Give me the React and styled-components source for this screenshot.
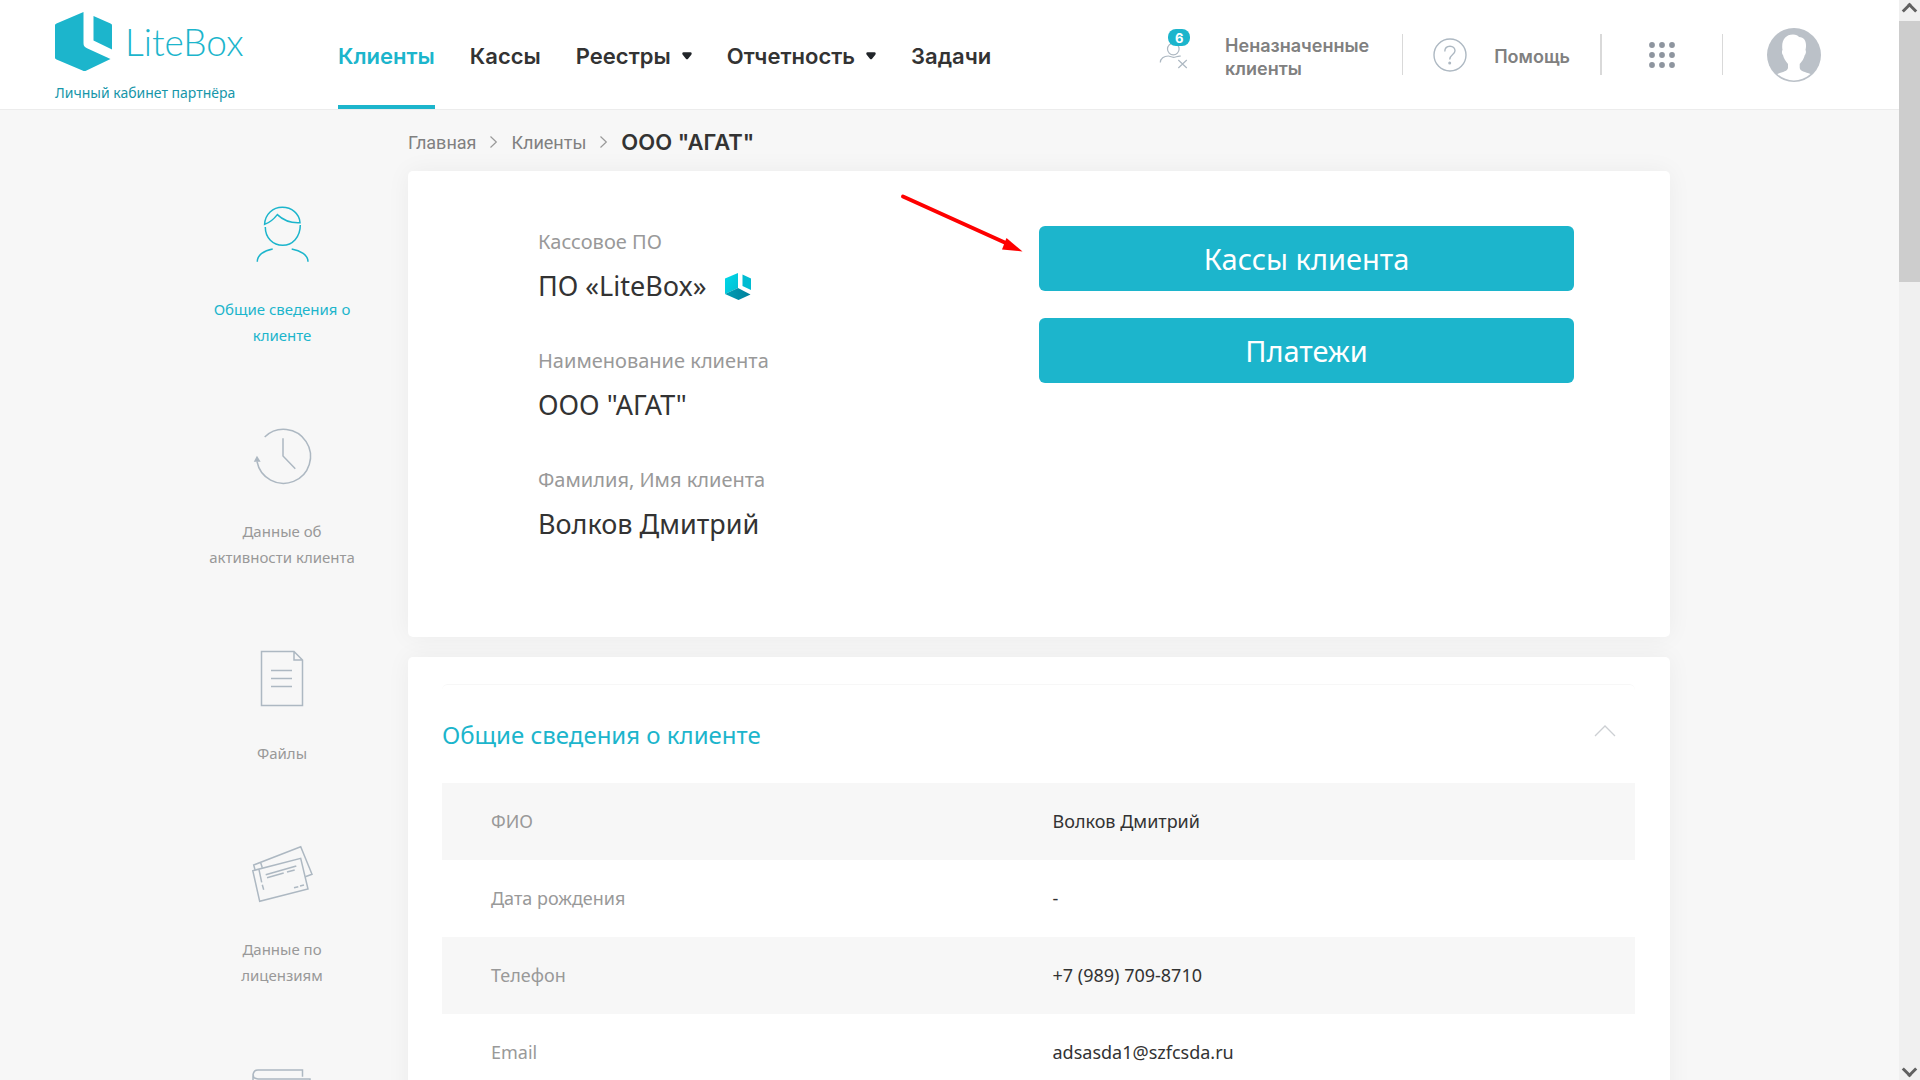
import React, { useState } from 'react'
import styled, { createGlobalStyle, css } from 'styled-components'

const colors = {
  main: '#1cb5cc',
  mainDark: '#1796a9',
  text: '#333333',
  gray: '#999999',
  navGray: '#808080',
  icon: '#adb8c2',
  line: '#ececec',
  background: '#f7f7f7',
}

const headFont = `Inter, Roboto, sans-serif`
const crumbFont = `Roboto, sans-serif`
const bodyFont = `'Noto Sans', 'Open Sans', sans-serif`

const NAV = [
  { title: 'Клиенты', active: true },
  { title: 'Кассы' },
  { title: 'Реестры', menu: true },
  { title: 'Отчетность', menu: true },
  { title: 'Задачи' },
]

const ROWS = [
  ['ФИО', 'Волков Дмитрий'],
  ['Дата рождения', '-'],
  ['Телефон', '+7 (989) 709-8710'],
  ['Email', 'adsasda1@szfcsda.ru'],
]

const UserIcon = () => (
  <svg width="56" height="56" viewBox="-1 0 56 56">
    <path d="M9.6 18.4C10 8 18 1.3 27.3 1.3S44.6 7.6 45 16.7C36.500 17.200 28.500 14.500 22.300 8.600C18.500 13.500 15 16.500 9.600 18.400Z" />
    <path d="M10.300 21C10.300 32 18 39.300 27.700 39.300S45.300 31 45.300 19" />
    <path d="M2.300 55.700C2.300 49 9 44.500 17.700 43M36.700 43C45.500 44.500 53 49 53 55.700" />
  </svg>
)

const ClockIcon = () => (
  <svg width="60" height="56" viewBox="-1 1 60 56">
    <path d="M11.700 10A27 27 0 1 1 4 34.500" />
    <path d="M30 11.300V29L42.300 41.700" />
    <path d="M2 34L4 30.300L6.300 34Z" fill="currentColor" />
  </svg>
)

const FileIcon = () => (
  <svg width="56" height="56" viewBox="0 0 56 56">
    <path d="M7.500 1.500H40L48.500 10V55.500H7.500ZM40 1.500V10H48.500" />
    <path d="M17 20.500H38M17 28.500H38M17 36.500H38" />
  </svg>
)

const LicenseIcon = () => (
  <svg width="62" height="56" viewBox="-1 0 62 56">
    <path d="M0.800 24.700L48.700 12.300L56 43L7.700 55.300Z" />
    <path d="M3 23.700L1.700 19L48.700 0.800L60 28.300L53.300 30.700M8.700 16.700L10.300 21.700" />
    <path d="M7 23.700L9.700 36.300M10.300 38.700L11.700 43.700M13.700 28.700L44.300 20M15 31.700L31.700 27M35 26L42.700 24M42 41.700L46.300 40.700M48 40L52 39" />
  </svg>
)

const BookIcon = () => (
  <svg width="60" height="56" viewBox="0 0 60 56">
    <path d="M50.500 8.700V2H6C2.500 2 1 5 1 8V50C1 53 3 55 6 55H58V11H6C3 11 1 9.500 1 6" />
  </svg>
)

const SIDEBAR = [
  { title: 'Общие сведения о клиенте', icon: UserIcon, active: true },
  { title: 'Данные об активности клиента', icon: ClockIcon },
  { title: 'Файлы', icon: FileIcon },
  { title: 'Данные по лицензиям', icon: LicenseIcon },
]

const LogoIcon = () => (
  <svg width="57" height="59" viewBox="0 0 57 59" fill={colors.main}>
    <path d="M28.500 0V31C28.500 34 29.500 35 32 36.300L55.500 47L31.500 58.500C30 59.200 29 59.200 27.500 58.500L1.500 47.500C0.500 47 0 46.500 0 45.500V13.500C0 12.500 0.500 12 1.500 11.500Z" />
    <path d="M38.500 4L55.500 11.500C56.500 12 57 12.500 57 13.500V37.500L38.500 28.500Z" />
  </svg>
)

const CubeIcon = () => (
  <svg width="26" height="27" viewBox="0 0 26 27">
    <defs>
      <linearGradient id="cubeLeft" x1="0" y1="0" x2="1" y2="1">
        <stop offset="0" stopColor="#00d8e8" />
        <stop offset="1" stopColor="#00bfd4" />
      </linearGradient>
      <linearGradient id="cubeBottom" x1="0" y1="0" x2="1" y2="0">
        <stop offset="0" stopColor="#009fb6" />
        <stop offset="1" stopColor="#007f9b" />
      </linearGradient>
    </defs>
    <path d="M13 0V15L0 21V5.500Z" fill="url(#cubeLeft)" />
    <path d="M13 15L25.500 21.500L13.500 27L0 21Z" fill="url(#cubeBottom)" />
    <path d="M17.500 1.500L26 5.500V17L17.500 13Z" fill="#00bcd2" />
  </svg>
)

const CaretIcon = () => (
  <svg width="10" height="8" viewBox="0 0 10 8" fill="#212529">
    <path d="M1.500 0.300H8.500C9.900 0.300 10 2 9.300 2.800L5.900 6.900C5.400 7.500 4.600 7.500 4.100 6.900L0.700 2.800C0 2 0.100 0.300 1.500 0.300Z" />
  </svg>
)

const NoClientIcon = () => (
  <svg width="34" height="42" viewBox="0 0 34 42" fill="none" stroke={colors.icon} strokeWidth="1.200">
    <circle cx="15.300" cy="22" r="5.800" />
    <path d="M2.300 35.500C2.300 31.500 6 29 10.300 29C12 29 13 30.300 15.500 30.300S19.500 28.700 22.700 29.200" />
    <path d="M20.300 33L28.800 41M28.800 33L20.300 41" />
  </svg>
)

const HelpIcon = () => (
  <svg width="34" height="34" viewBox="0 0 34 34" fill="none" stroke={colors.icon} strokeWidth="1.400">
    <circle cx="17" cy="17" r="16" />
    <path d="M11.800 13.500C11.800 10 14 8.200 17 8.200S22 10.200 22 12.800C22 16.500 16.700 16.500 16.700 21.500" />
    <circle cx="16.700" cy="25" r="0.800" fill={colors.icon} />
  </svg>
)

const AppsIcon = () => (
  <svg width="26" height="26" viewBox="0 0 26 26" fill="#8e959f">
    {[3, 13, 23].map((y) => [3, 13, 23].map((x) => <circle key={`${x}-${y}`} cx={x} cy={y} r="2.900" />))}
  </svg>
)

const AvatarIcon = () => (
  <svg width="54" height="54" viewBox="0 0 54 54">
    <circle cx="27" cy="27" r="27" fill="#bbc1c8" />
    <path
      d="M10.300 46C15 44 21 43.500 21 39.500V36C18.500 33 16.500 30 16 27C14.800 26 14.600 23 15.500 22C14 13 18 6.500 26 6.500C29 6.500 31 7.500 32 9C38.500 9.500 40 15 38.500 22C39.300 23 39 26 37.800 27C37 30.500 35 33.500 32.700 36V39.500C32.700 43.500 38.500 44 43.500 46C34 54.500 19.500 54.500 10.300 46Z"
      fill="#ffffff"
    />
  </svg>
)

const CrumbArrow = () => (
  <svg width="7" height="12" viewBox="0 0 7 12" fill="none" stroke="#999999" strokeWidth="1.200">
    <path d="M0.500 0.500L6.300 6L0.500 11.500" />
  </svg>
)

const ChevronIcon = () => (
  <svg width="22" height="12" viewBox="0 0 22 12" fill="none" stroke="#cccfd3" strokeWidth="1.300">
    <path d="M1 11L11 1L21 11" />
  </svg>
)

const PointerArrow = () => (
  <svg width="123" height="59" viewBox="0 0 123 59">
    <path d="M3 2.500L108 50" stroke="#fe0000" strokeWidth="4" strokeLinecap="round" />
    <path d="M106.500 44L122.500 57.500L102 55.500Z" fill="#fe0000" />
  </svg>
)

function Header() {
  return (
    <HeaderLayout>
      <Logo href="#">
        <LogoRow>
          <LogoIcon />
          <LogoName>LiteBox</LogoName>
        </LogoRow>
        <LogoNote>Личный кабинет партнёра</LogoNote>
      </Logo>
      <Nav>
        {NAV.map(({ title, active, menu }) => (
          <NavLink key={title} href="#" $active={active}>
            {title}
            {menu && <CaretIcon />}
          </NavLink>
        ))}
      </Nav>
      <HeaderTools>
        <ToolLink href="#">
          <BadgeBox>
            <NoClientIcon />
            <Badge>6</Badge>
          </BadgeBox>
          <ToolText>
            Неназначенные
            <br />
            клиенты
          </ToolText>
        </ToolLink>
        <Divider />
        <HelpLink href="#">
          <HelpIcon />
          <ToolText>Помощь</ToolText>
        </HelpLink>
        <Divider $wide />
        <AppsButton type="button" aria-label="Приложения">
          <AppsIcon />
        </AppsButton>
        <Divider />
        <AvatarButton type="button" aria-label="Профиль">
          <AvatarIcon />
        </AvatarButton>
      </HeaderTools>
    </HeaderLayout>
  )
}

function Sidebar() {
  return (
    <SidebarLayout>
      {SIDEBAR.map(({ title, icon: Icon, active }) => (
        <SidebarLink key={title} href="#" $active={active}>
          <Icon />
          <SidebarText>{title}</SidebarText>
        </SidebarLink>
      ))}
      <SidebarLink href="#" aria-label="Документы">
        <BookIcon />
      </SidebarLink>
    </SidebarLayout>
  )
}

function ClientCard() {
  return (
    <SummaryCard>
      <FieldList>
        <Field>
          <dt>Кассовое ПО</dt>
          <dd>
            ПО «LiteBox»
            <CubeIcon />
          </dd>
        </Field>
        <Field>
          <dt>Наименование клиента</dt>
          <dd>ООО "АГАТ"</dd>
        </Field>
        <Field>
          <dt>Фамилия, Имя клиента</dt>
          <dd>Волков Дмитрий</dd>
        </Field>
      </FieldList>
      <Actions>
        <Pointer>
          <PointerArrow />
        </Pointer>
        <ActionButton type="button">Кассы клиента</ActionButton>
        <ActionButton type="button">Платежи</ActionButton>
      </Actions>
    </SummaryCard>
  )
}

function DetailsCard() {
  const [open, setOpen] = useState(true)

  return (
    <DetailsLayout>
      <DetailsTitle>
        <DetailsToggle type="button" aria-expanded={open} onClick={() => setOpen(!open)}>
          Общие сведения о клиенте
          <ChevronIcon />
        </DetailsToggle>
      </DetailsTitle>
      {open && (
        <DetailsTable>
          <tbody>
            {ROWS.map(([label, value]) => (
              <tr key={label}>
                <th scope="row">{label}</th>
                <td>{value}</td>
              </tr>
            ))}
          </tbody>
        </DetailsTable>
      )}
    </DetailsLayout>
  )
}

function App() {
  return (
    <>
      <GlobalStyle />
      <Screen>
        <Page>
          <Header />
          <Content>
            <Sidebar />
            <Main>
              <Breadcrumbs>
                <a href="#">Главная</a>
                <CrumbArrow />
                <a href="#">Клиенты</a>
                <CrumbArrow />
                <h1>ООО "АГАТ"</h1>
              </Breadcrumbs>
              <ClientCard />
              <DetailsCard />
            </Main>
          </Content>
        </Page>
        <Scrollbar>
          <ScrollArrow />
          <ScrollThumb />
          <ScrollArrow $down />
        </Scrollbar>
      </Screen>
    </>
  )
}

export default App

const GlobalStyle = createGlobalStyle`
  * {
    box-sizing: border-box;
  }

  body {
    margin: 0;
    background: ${colors.background};
    color: ${colors.text};
    font-family: ${bodyFont};
  }

  a {
    color: inherit;
    text-decoration: none;
  }

  button {
    padding: 0;
    border: 0;
    background: none;
    font: inherit;
    color: inherit;
    cursor: pointer;
  }

  svg {
    display: block;
    flex-shrink: 0;
    overflow: visible;
  }
`

const Screen = styled.div`
  display: flex;
  height: 100vh;
  overflow: hidden;
`

const Page = styled.div`
  flex: 1;
  min-width: 0;
`

const HeaderLayout = styled.header`
  display: flex;
  height: 110px;
  padding: 0 78px 0 55px;
  background: #ffffff;
  border-bottom: 1px solid ${colors.line};
`

const Logo = styled.a`
  width: 283px;
  padding-top: 12px;
`

const LogoRow = styled.div`
  display: flex;
  align-items: center;
  gap: 13px;
`

const LogoName = styled.span`
  font-family: Lato, 'Open Sans', sans-serif;
  font-weight: 300;
  font-size: 37px;
  line-height: 59px;
  color: ${colors.main};
`

const LogoNote = styled.div`
  padding-top: 12px;
  font-size: 14px;
  line-height: 20px;
  color: ${colors.mainDark};
`

const Nav = styled.nav`
  display: flex;
  gap: 35px;
`

const NavLink = styled.a`
  display: flex;
  align-items: center;
  gap: 11px;
  padding-top: 6px;
  border-bottom: 4px solid transparent;
  font-family: ${headFont};
  font-weight: 600;
  font-size: 22px;

  ${({ $active }) =>
    $active &&
    css`
      color: ${colors.main};
      border-color: ${colors.main};
    `}
`

const HeaderTools = styled.div`
  display: flex;
  align-items: center;
  margin-left: auto;
  font-family: ${headFont};
  font-weight: 600;
  font-size: 18px;
  line-height: 23px;
  color: ${colors.navGray};
`

const ToolLink = styled.a`
  display: flex;
  align-items: center;
  gap: 33px;
  padding-right: 3px;
`

const BadgeBox = styled.span`
  position: relative;
  padding-bottom: 14px;
`

const Badge = styled.span`
  position: absolute;
  top: 2px;
  right: 2px;
  width: 22px;
  height: 17px;
  border-radius: 8px;
  background: ${colors.main};
  color: #ffffff;
  font-weight: 700;
  font-size: 13px;
  line-height: 18px;
  text-align: center;
`

const ToolText = styled.span`
  padding-top: 4px;
`

const Divider = styled.span`
  width: ${({ $wide }) => ($wide ? '2px' : '1px')};
  height: 41px;
  margin: 0 30px;
  background: #d9d9d9;
`

const HelpLink = styled.a`
  display: flex;
  align-items: center;
  gap: 27px;
`

const AppsButton = styled.button`
  padding: 0 17px;
`

const AvatarButton = styled.button`
  padding-left: 14px;
`

const Content = styled.div`
  display: grid;
  grid-template-columns: 252px 1fr;
  padding: 0 229px 0 156px;
`

const SidebarLayout = styled.nav`
  display: flex;
  flex-direction: column;
  align-items: center;
  gap: 80px;
  padding-top: 96px;
`

const SidebarLink = styled.a`
  display: flex;
  flex-direction: column;
  align-items: center;
  gap: 34px;
  color: ${({ $active }) => ($active ? colors.main : colors.gray)};

  svg {
    color: ${({ $active }) => ($active ? colors.main : colors.icon)};
    fill: none;
    stroke: currentColor;
    stroke-width: 1.5;
  }
`

const SidebarText = styled.span`
  max-width: 150px;
  font-size: 15px;
  line-height: 26px;
  text-align: center;
`

const Main = styled.main`
  min-width: 0;
`

const Breadcrumbs = styled.nav`
  display: flex;
  align-items: center;
  gap: 14px;
  height: 61px;
  padding-top: 3px;
  font-family: ${crumbFont};
  font-size: 18px;
  color: ${colors.navGray};

  h1 {
    margin: 0;
    font-family: ${headFont};
    font-weight: 600;
    font-size: 22px;
    color: ${colors.text};
  }
`

const Card = styled.section`
  background: #ffffff;
  border-radius: 5px;
  box-shadow: 0 0 25px rgba(0, 0, 0, 0.05);
`

const SummaryCard = styled(Card)`
  display: grid;
  grid-template-columns: 501fr 535fr;
  padding: 55px 96px 93px 130px;
`

const FieldList = styled.dl`
  display: flex;
  flex-direction: column;
  gap: 39px;
  margin: 0;
`

const Field = styled.div`
  dt {
    font-size: 20px;
    line-height: 32px;
    color: ${colors.gray};
  }

  dd {
    display: flex;
    align-items: center;
    gap: 18px;
    margin: 0;
    padding-top: 8px;
    font-size: 27px;
    line-height: 40px;
  }
`

const Actions = styled.div`
  position: relative;
  display: flex;
  flex-direction: column;
  gap: 27px;
`

const Pointer = styled.div`
  position: absolute;
  top: -32px;
  right: calc(100% + 16px);
`

const ActionButton = styled.button`
  height: 65px;
  border-radius: 6px;
  background: ${colors.main};
  color: #ffffff;
  font-size: 29px;
  line-height: 40px;
`

const DetailsLayout = styled(Card)`
  margin-top: 20px;
  padding: 27px 35px 40px 34px;
`

const DetailsTitle = styled.h2`
  margin: 0;
  border: solid ${colors.background};
  border-width: 1px 0 0;
  border-radius: 6px;
`

const DetailsToggle = styled.button`
  display: flex;
  align-items: center;
  justify-content: space-between;
  width: 100%;
  height: 98px;
  padding: 0 19px 0 0;
  font-weight: 400;
  font-size: 24px;
  color: ${colors.main};

  svg {
    margin-bottom: 6px;
  }
`

const DetailsTable = styled.table`
  width: 100%;
  table-layout: fixed;
  border-collapse: collapse;
  font-size: 18px;
  line-height: 27px;

  tr:nth-child(odd) {
    background: ${colors.background};
  }

  th,
  td {
    width: 50%;
    padding: 25px 0 25px 14px;
    font-weight: 400;
    text-align: left;
  }

  th {
    padding-left: 49px;
    color: ${colors.gray};
  }
`

const Scrollbar = styled.div`
  display: flex;
  flex-direction: column;
  width: 21px;
  background: #f0f0f0;
`

const ScrollArrow = styled.span`
  display: flex;
  align-items: center;
  justify-content: center;
  height: 21px;
  margin-top: ${({ $down }) => ($down ? 'auto' : '0')};

  &::before {
    content: '';
    width: 8px;
    height: 8px;
    border: solid #606060;
    border-width: 3px 0 0 3px;
    transform: ${({ $down }) => ($down ? 'rotate(225deg)' : 'rotate(45deg)')};
  }
`

const ScrollThumb = styled.span`
  height: 261px;
  background: #cdcdcd;
`
